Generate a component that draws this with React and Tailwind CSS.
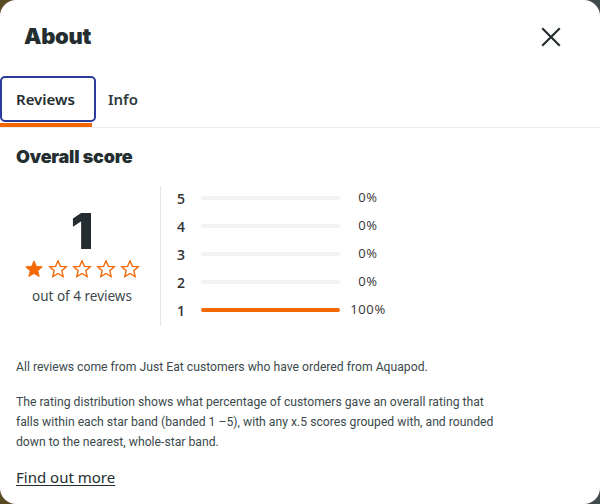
import React from 'react'

const rows = [
  { band: 5, pct: 0 },
  { band: 4, pct: 0 },
  { band: 3, pct: 0 },
  { band: 2, pct: 0 },
  { band: 1, pct: 100 },
]

const Star = ({ filled }) => (
  <svg width="20" height="20" viewBox="0 0 24 24" className="shrink-0">
    <path
      d="M12 2.2l2.9 6.6 7.1.6-5.4 4.7 1.6 7-6.2-3.7-6.2 3.7 1.6-7L2 9.4l7.1-.6z"
      fill={filled ? '#f36805' : 'none'}
      stroke="#f36805"
      strokeWidth={filled ? 1 : 1.6}
      strokeLinejoin="miter"
    />
  </svg>
)

const heavy = { fontFamily: 'Inter, "Noto Sans", sans-serif' }

export default function App() {
  return (
    <div className="h-[504px] w-[600px] bg-gradient-to-r from-[#5a4a22] via-[#3f4a4c] to-[#3f4a4c]">
      <div
        className="h-[504px] w-[600px] rounded-[16px] bg-white overflow-hidden text-[#242e30]"
        style={{ fontFamily: '"Noto Sans", "Open Sans", sans-serif' }}
      >
        {/* Header */}
        <div className="flex items-center justify-between pl-6 pr-[39px] h-[76px]">
          <h1 className="text-[22px] font-black tracking-[-0.3px] leading-none mt-[-4px]" style={heavy}>
            About
          </h1>
          <svg width="20" height="20" viewBox="0 0 20 20" className="mt-[-2px]">
            <path d="M2 2L18 18M18 2L2 18" stroke="#242e30" strokeWidth="2.2" strokeLinecap="square" />
          </svg>
        </div>

        {/* Tabs */}
        <div className="flex border-b border-[#ececec]">
          <div className="relative">
            <div className="h-[46px] w-[96px] border-2 border-[#2b3b9b] rounded-[5px] flex items-center pl-[14px] text-[15px] font-semibold">
              Reviews
            </div>
            <div className="h-[4px] w-[92px] bg-[#f36805] mt-[1px]" />
          </div>
          <div className="h-[46px] flex items-center pl-3 text-[15px] font-semibold text-[#303c3e]">Info</div>
        </div>

        {/* Score */}
        <div className="px-4">
          <h2 className="text-[18px] font-black leading-none mt-[20px] tracking-[-0.2px]" style={heavy}>
            Overall score
          </h2>

          <div className="flex mt-[20px]">
            <div className="w-[128px] flex flex-col items-center pt-[20px] ml-[2px]">
              <div className="text-[50px] font-black leading-none" style={heavy}>1</div>
              <div className="flex gap-[4px] mt-[3px]">
                <Star filled />
                <Star />
                <Star />
                <Star />
                <Star />
              </div>
              <div className="text-[13.5px] text-[#3c4a4c] mt-[7px]">out of 4 reviews</div>
            </div>

            <div className="w-px h-[140px] bg-[#e4e4e4] ml-[14px]" />

            <div className="flex flex-col pl-[16px] mt-[-2px]" style={{ fontFamily: '"Open Sans", sans-serif' }}>
              {rows.map((r) => (
                <div key={r.band} className="flex items-center h-[28px]">
                  <span className="w-[24px] text-[14px] font-semibold text-[#333]">{r.band}</span>
                  <div className="w-[139px] h-[4px] rounded-full bg-[#f5f3f1]">
                    <div className="h-[4px] rounded-full bg-[#f36805]" style={{ width: `${r.pct}%` }} />
                  </div>
                  <span className="w-[56px] text-center text-[13px] text-[#333] tracking-[0.6px]">{r.pct}%</span>
                </div>
              ))}
            </div>
          </div>

          {/* Notes */}
          <div className="max-w-[486px] text-[12px] leading-[20px] text-[#3c4a4c] mt-[31px]" style={{ fontFamily: 'Roboto, sans-serif' }}>
            <p className="text-[12.2px]">All reviews come from Just Eat customers who have ordered from Aquapod.</p>
            <p className="mt-[15px] text-[12.2px]">
              The rating distribution shows what percentage of customers gave an overall rating that falls within each star
              band (banded 1 –5), with any x.5 scores grouped with, and rounded down to the nearest, whole-star band.
            </p>
            <a
              href="#"
              className="inline-block mt-[15px] text-[15px] text-[#242e30] underline underline-offset-2"
              style={{ fontFamily: '"Noto Sans", sans-serif' }}
            >
              Find out more
            </a>
          </div>
        </div>
      </div>
    </div>
  )
}
